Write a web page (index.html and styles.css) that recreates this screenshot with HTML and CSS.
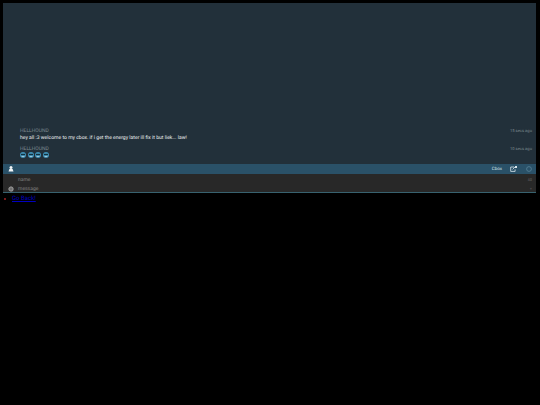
FILE: index.html
```html
<!DOCTYPE html>
<html lang="en">
<head>
<meta charset="utf-8">
<title>cbox</title>
<link rel="stylesheet" href="styles.css">
</head>
<body>
<div class="cbox">
  <div class="messages">
    <div class="msg">
      <div class="meta"><span class="author">HELLHOUND</span><span class="time">15 secs ago</span></div>
      <div class="text">hey all :3 welcome to my cbox. if i get the energy later ill fix it but liek... law!</div>
    </div>
    <div class="msg">
      <div class="meta"><span class="author">HELLHOUND</span><span class="time">10 secs ago</span></div>
      <div class="smileys">
        <svg class="smiley" viewBox="0 0 6 6"><circle cx="3" cy="3" r="3" fill="#3f8fb5"/><rect x="1" y="1.9" width="4" height="1.2" fill="#12303e"/><rect x="1.6" y="4" width="2.8" height=".8" fill="#b9d6e4"/></svg>
        <svg class="smiley" viewBox="0 0 6 6"><circle cx="3" cy="3" r="3" fill="#3f8fb5"/><rect x="1" y="1.9" width="4" height="1.2" fill="#12303e"/><rect x="1.6" y="4" width="2.8" height=".8" fill="#b9d6e4"/></svg>
        <svg class="smiley" viewBox="0 0 6 6"><circle cx="3" cy="3" r="3" fill="#3f8fb5"/><rect x="1" y="1.9" width="4" height="1.2" fill="#12303e"/><rect x="1.6" y="4" width="2.8" height=".8" fill="#b9d6e4"/></svg>
        <svg class="smiley" viewBox="0 0 6 6"><circle cx="3" cy="3" r="3" fill="#3f8fb5"/><rect x="1" y="1.9" width="4" height="1.2" fill="#12303e"/><rect x="1.6" y="4" width="2.8" height=".8" fill="#b9d6e4"/></svg>
      </div>
    </div>
  </div>
  <div class="bar">
    <svg class="bar-user" viewBox="0 0 6 6"><circle cx="3" cy="1.6" r="1.5" fill="#f2f6f8"/><path d="M.5 5.6 1.4 3h3.2l.9 2.6z" fill="#f2f6f8"/></svg>
    <span class="bar-label">Cbox</span>
    <svg class="bar-popout" viewBox="0 0 7 6"><path d="M4 1H.7v4.4h4.4V3.4M2.6 3.4 5 1" fill="none" stroke="#dbe7ed" stroke-width=".8"/><rect x="5" y="0" width="2" height="2" fill="#dbe7ed"/></svg>
    <svg class="bar-power" viewBox="0 0 6 6"><circle cx="3" cy="3" r="2.4" fill="none" stroke="#5f8a9f" stroke-width=".7"/></svg>
  </div>
  <div class="form">
    <div class="row">
      <span class="slot"></span>
      <span class="field">name</span>
      <span class="side">40</span>
    </div>
    <div class="row">
      <span class="slot"><svg class="gear" viewBox="0 0 6 6"><circle cx="3" cy="3" r="1.9" fill="none" stroke="#8f8f8f" stroke-width="1.3"/><path d="M3 0v6M0 3h6M.9.9l4.2 4.2M5.1.9.9 5.1" stroke="#8f8f8f" stroke-width=".5"/></svg></span>
      <span class="field">message</span>
      <span class="side">+</span>
    </div>
  </div>
</div>
<ul class="links">
  <li><a href="#">Go Back!</a></li>
</ul>
</body>
</html>
```
FILE: styles.css
```css
html, body { margin: 0; padding: 0; background: #000; }
body { font-family: Roboto, "Liberation Sans", sans-serif; font-size: 5px; padding: 3px 4px 0 3px; text-rendering: geometricPrecision; }
.cbox { display: flex; flex-direction: column; height: 190px; background: #22303a; border-bottom: 1px solid #38626f; box-sizing: border-box; }
.messages { flex: 1; display: flex; flex-direction: column; justify-content: flex-end; gap: 4px; padding: 0 4px 6px 17px; }
.msg { display: flex; flex-direction: column; }
.meta { display: flex; justify-content: space-between; align-items: center; color: #7d8a90; line-height: 7px; }
.author { font-size: 5px; }
.time { font-size: 4.1px; }
.text { color: #eef1f2; font-size: 5.05px; line-height: 7px; }
.smileys { display: flex; gap: 1.5px; height: 6px; margin-top: -1px; align-items: center; }
.smiley { width: 6px; height: 6px; }
.bar { height: 10px; background: #2a5168; display: flex; align-items: center; padding: 0 4px 0 5px; color: #d8e4ea; }
.bar-user { width: 6px; height: 6px; }
.bar-label { margin-left: auto; font-size: 4.5px; }
.bar-popout { width: 7px; height: 6px; margin-left: 8px; }
.bar-power { width: 6px; height: 6px; margin-left: 9px; }
.form { background: #282828; display: flex; flex-direction: column; height: 18px; padding-top: 1px; box-sizing: border-box; }
.row { height: 9px; flex: none; display: flex; align-items: center; padding: 0 4px 0 5px; color: #808080; }
.slot { width: 6px; height: 6px; display: flex; }
.gear { width: 6px; height: 6px; }
.field { margin-left: 4px; font-size: 5px; flex: 1; }
.side { font-size: 4px; color: #666; }
.links { margin: 0; padding: 0 0 0 9px; list-style: none; line-height: 8px; }
.links li { position: relative; margin-top: 2px; }
.links li::before { content: ""; position: absolute; left: -8.5px; top: 3px; width: 2px; height: 2px; background: #7a1a1a; }
.links a { color: #0000c0; font-size: 6px; }
```
